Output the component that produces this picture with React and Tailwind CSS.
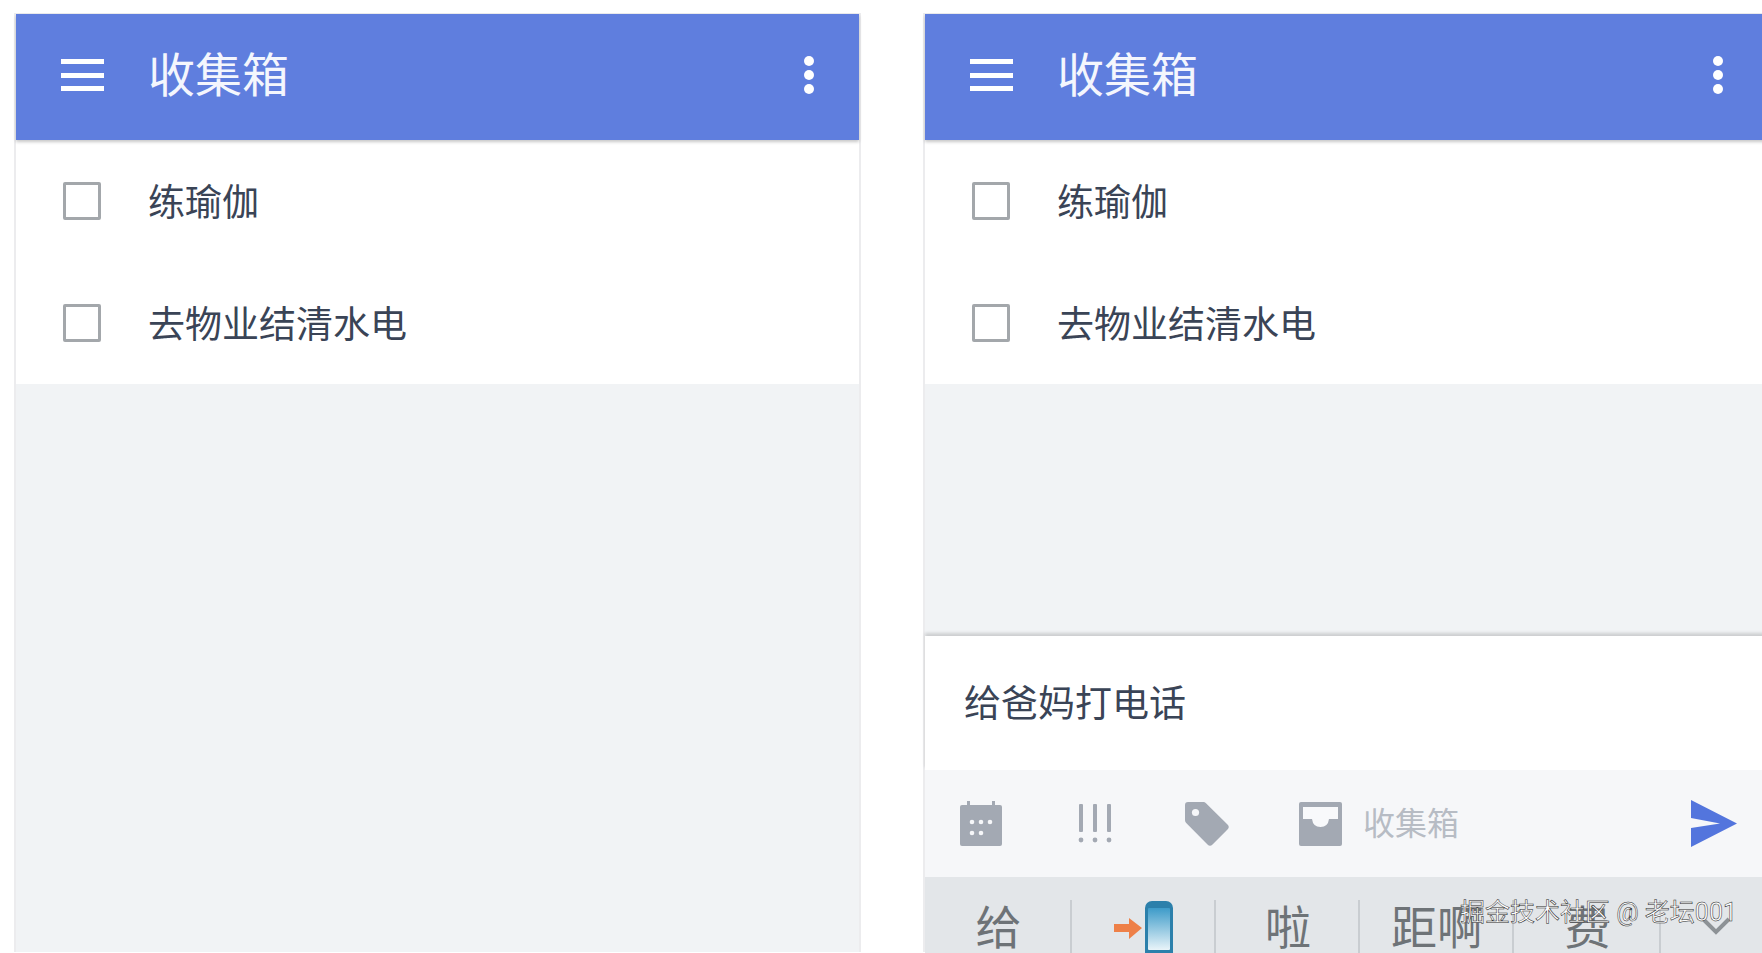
const FONT = "font-['Roboto','Noto_Sans_CJK_SC',sans-serif]";

function Header() {
  return (
    <div className="relative z-10 flex h-[126px] shrink-0 items-center bg-[#5f7ede] pb-[4px] pl-[45px] pr-[45px] shadow-[0_2px_3px_rgba(0,0,0,0.22)]">
      <div className="flex w-[43px] flex-col gap-[8.5px]">
        <div className="h-[5px] bg-white" />
        <div className="h-[5px] bg-white" />
        <div className="h-[5px] bg-white" />
      </div>
      <div className="ml-[44px] flex-1 text-[47px] leading-none text-[#f4f6fd]">收集箱</div>
      <div className="flex flex-col gap-[4px]">
        <div className="h-[10px] w-[10px] rounded-full bg-white" />
        <div className="h-[10px] w-[10px] rounded-full bg-white" />
        <div className="h-[10px] w-[10px] rounded-full bg-white" />
      </div>
    </div>
  );
}

function Row({ children }) {
  return (
    <div className="flex h-[122px] items-center pl-[47px]">
      <div className="h-[38px] w-[38px] shrink-0 rounded-[2px] border-[3px] border-[#a3a7ab] bg-white" />
      <div className="ml-[47px] translate-y-[2px] text-[37px] leading-none text-[#3a4456]">{children}</div>
    </div>
  );
}

function Panel({ children }) {
  return (
    <div className="flex h-[939px] w-[847px] shrink-0 flex-col border-x-2 border-t border-x-[#ececee] border-t-[#ececee] bg-[#f1f3f5]">
      <Header />
      <div className="bg-white">
        <Row>练瑜伽</Row>
        <Row>去物业结清水电</Row>
      </div>
      {children}
    </div>
  );
}

function CalendarIcon() {
  return (
    <svg width="44" height="46" viewBox="0 0 44 46">
      <rect x="8" y="0" width="3" height="8" fill="#a3a9b3" />
      <rect x="33" y="0" width="3" height="8" fill="#a3a9b3" />
      <rect x="1" y="4" width="42" height="41" rx="2" fill="#a3a9b3" />
      <g fill="#f6f7f9">
        <circle cx="13" cy="21" r="2.3" />
        <circle cx="22" cy="21" r="2.3" />
        <circle cx="31" cy="21" r="2.3" />
        <circle cx="13" cy="32" r="2.3" />
        <circle cx="22" cy="32" r="2.3" />
      </g>
    </svg>
  );
}

function PriorityIcon() {
  return (
    <svg width="36" height="40" viewBox="0 0 36 40" fill="#a3a9b3">
      <rect x="2" y="0" width="4" height="28" rx="1" />
      <rect x="16" y="0" width="4" height="28" rx="1" />
      <rect x="30" y="0" width="4" height="28" rx="1" />
      <circle cx="4" cy="36" r="2.4" />
      <circle cx="18" cy="36" r="2.4" />
      <circle cx="32" cy="36" r="2.4" />
    </svg>
  );
}

function TagIcon() {
  return (
    <svg width="44" height="44" viewBox="0 0 44 44">
      <path
        d="M3 0H18a4 4 0 0 1 3 1.2L42.5 22.5a3.5 3.5 0 0 1 0 5L27.5 42.5a3.5 3.5 0 0 1-5 0L1.2 21A4 4 0 0 1 0 18V3a3 3 0 0 1 3-3Z"
        fill="#a3a9b3"
      />
      <circle cx="10.5" cy="10.5" r="3.6" fill="#f6f7f9" />
    </svg>
  );
}

function InboxIcon() {
  return (
    <svg width="43" height="44" viewBox="0 0 43 44">
      <rect width="43" height="44" rx="2" fill="#a3a9b3" />
      <path d="M4 5H39V17H30Q29 25 21.500 25T13 17H4Z" fill="#f8f9fb" />
    </svg>
  );
}

function PhoneIcon() {
  return (
    <svg width="60" height="62" viewBox="0 0 60 62" className="mt-[24px]">
      <defs>
        <linearGradient id="screen" x1="0" y1="0" x2="0" y2="1">
          <stop offset="0" stopColor="#3d9bc9" />
          <stop offset="1" stopColor="#e9f4f9" />
        </linearGradient>
      </defs>
      <path d="M0 23H15V17L28 27L15 38V31H0Z" fill="#ee8048" />
      <rect x="31" y="0" width="28" height="62" rx="7" fill="#2c80ab" />
      <rect x="34" y="7" width="22" height="42" rx="1" fill="url(#screen)" />
    </svg>
  );
}

function SendIcon() {
  return (
    <svg width="48" height="48" viewBox="0 0 48 48">
      <path d="M1 0L47 23.500L1 47V28L30 23.500L1 18Z" fill="#5375dd" />
    </svg>
  );
}

function Cell({ w, children, last }) {
  return (
    <div className={`relative flex h-full shrink-0 items-start justify-center ${w}`}>
      {children}
      {!last && <div className="absolute right-0 top-[23px] h-[60px] w-[2px] bg-[#c9cdd1]" />}
    </div>
  );
}

function Composer() {
  return (
    <div className="relative z-10 flex flex-1 flex-col">
      <div className="h-[134px] bg-white pl-[39px] pt-[50px] shadow-[0_-3px_3px_rgba(0,0,0,0.15)]">
        <div className="text-[37px] leading-none text-[#3a4456]">给爸妈打电话</div>
      </div>
      <div className="flex h-[107px] items-center bg-[#f6f7f9] pl-[34px] pr-[30px]">
        <CalendarIcon />
        <div className="ml-[74px]"><PriorityIcon /></div>
        <div className="ml-[72px]"><TagIcon /></div>
        <div className="ml-[70px]"><InboxIcon /></div>
        <div className="ml-[21px] text-[32px] leading-none text-[#b7bcc4]">收集箱</div>
        <div className="ml-auto"><SendIcon /></div>
      </div>
      <div className="flex flex-1 overflow-hidden bg-[#e3e6e9] text-[46px] leading-none text-[#6e7377]">
        <Cell w="w-[147px]"><span className="mt-[28px]">给</span></Cell>
        <Cell w="w-[144px]"><PhoneIcon /></Cell>
        <Cell w="w-[144px]"><span className="mt-[28px]">啦</span></Cell>
        <Cell w="w-[154px]"><span className="mt-[28px]">距啊</span></Cell>
        <Cell w="w-[147px]"><span className="mt-[28px]">费</span></Cell>
        <Cell w="w-[109px]" last>
          <svg width="30" height="18" viewBox="0 0 30 18" className="mt-[40px]">
            <path d="M2 2L15 15L28 2" fill="none" stroke="#8d9296" strokeWidth="4" />
          </svg>
        </Cell>
      </div>
    </div>
  );
}

export default function App() {
  return (
    <div className={`relative h-[953px] w-[1762px] overflow-hidden bg-white ${FONT}`}>
      <div className="flex gap-[62px] pl-[14px] pt-[13px]">
        <Panel />
        <Panel>
          <div className="h-[252px] shrink-0" />
          <Composer />
        </Panel>
      </div>
      <div className="absolute left-[1460px] top-[899px] z-20 whitespace-nowrap text-[25px] leading-[28px] text-white [-webkit-text-stroke:0.5px_#222]">
        掘金技术社区 @ 老坛001
      </div>
    </div>
  );
}
